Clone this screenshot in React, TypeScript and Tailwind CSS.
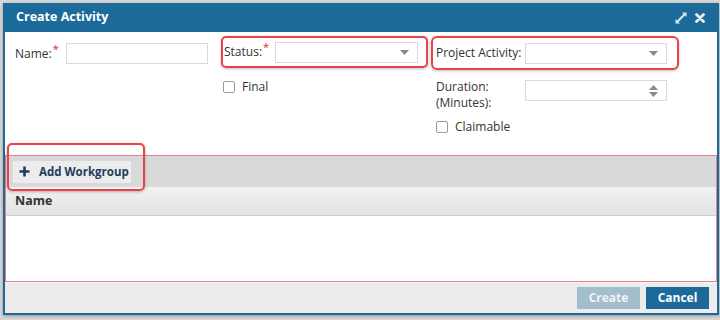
import React from 'react'

const Req = () => <span className="text-[#e3262b] text-[11px] relative -top-[5px] ml-[1px]">*</span>

const Caret = () => (
  <svg width="9" height="5" viewBox="0 0 9 5"><path d="M0 0h9L4.5 5z" fill="#8a8a8a" /></svg>
)

const Select = ({ w }: { w: string }) => (
  <div className={`${w} h-[21px] border border-[#d9d9d9] bg-white flex items-center justify-end pr-[8px]`}>
    <Caret />
  </div>
)

const Check = ({ label }: { label: string }) => (
  <div className="flex items-center gap-[7px]">
    <div className="w-[12px] h-[12px] border border-[#9a9a9a] rounded-[2px] bg-white" />
    <span>{label}</span>
  </div>
)

export default function App() {
  return (
    <div className="w-[720px] h-[320px] bg-[#d6d6d6] pt-[3px] pl-[3px] text-[12px] text-[#333]" style={{ fontFamily: '"Open Sans", "Noto Sans", sans-serif' }}>
      <div className="relative w-[716px] h-[312px] bg-white border-x-2 border-b-2 border-[#1b6a9a] flex flex-col shadow-[0_1px_3px_rgba(0,0,0,0.3)]">
        {/* header */}
        <div className="h-[29px] -mx-[2px] bg-[#1b6a9a] flex items-center pl-[13px] pr-[14px] text-white">
          <span className="font-bold text-[12.5px] flex-1">Create Activity</span>
          <svg width="12" height="12" viewBox="0 0 13 13" className="mr-[8px]">
            <path d="M7.5 0.5H12.5V5.5L10.8 3.8L3.8 10.8L5.5 12.5H0.5V7.5L2.2 9.2L9.2 2.2Z" fill="#dbe7f0" />
          </svg>
          <svg width="10" height="10" viewBox="0 0 10 10">
            <path d="M1.5 1.5L8.5 8.5M8.5 1.5L1.5 8.5" stroke="#e9f0f5" strokeWidth="2.8" strokeLinecap="round" />
          </svg>
        </div>

        {/* form */}
        <div className="h-[123px] flex items-start pl-[10px] pt-[4px]">
          <div className="flex items-center mt-[7px]">
            <span className="w-[51px] shrink-0">Name:<Req /></span>
            <div className="w-[142px] h-[21px] border border-[#d9d9d9]" />
          </div>
          <div className="ml-[13px] flex flex-col">
            <div className="w-[207px] h-[32px] border-2 border-[#e8424a] rounded-[5px] flex items-center pl-[1px] shadow-[0_1px_3px_rgba(0,0,0,0.25)]">
              <span className="w-[51px] shrink-0">Status:<Req /></span>
              <Select w="w-[143px]" />
            </div>
            <div className="mt-[10px] ml-[2px]"><Check label="Final" /></div>
          </div>
          <div className="ml-[3px] flex flex-col">
            <div className="w-[248px] h-[34px] border-2 border-[#e8424a] rounded-[6px] flex items-center pl-[3px] shadow-[0_1px_3px_rgba(0,0,0,0.25)]">
              <span className="w-[89px] shrink-0">Project Activity:</span>
              <Select w="w-[142px]" />
            </div>
            <div className="flex items-start mt-[10px] ml-[5px]">
              <span className="w-[89px] shrink-0 leading-[16px] -mt-[1px]">Duration:<br />(Minutes):</span>
              <div className="w-[142px] h-[21px] border border-[#d9d9d9] flex items-center justify-end pr-[8px]">
                <svg width="9" height="12" viewBox="0 0 9 12"><path d="M0 5h9L4.5 0zM0 7h9L4.5 12z" fill="#8a8a8a" /></svg>
              </div>
            </div>
            <div className="mt-[7px] ml-[5px]"><Check label="Claimable" /></div>
          </div>
        </div>

        {/* workgroup grid */}
        <div className="h-[127px] border border-[#ec7f86] flex flex-col">
          <div className="h-[31px] bg-[#d9d9d9] flex items-center pl-[7px]">
            <div className="h-[22px] w-[118px] bg-[#ececec] flex items-center pl-[6px] gap-[9px] text-[#1e3d5a] font-bold text-[11.5px]">
              <svg width="11" height="11" viewBox="0 0 11 11"><path d="M5.5 0.5V10.5M0.5 5.5H10.5" stroke="#1e3d5a" strokeWidth="2.6" /></svg>
              <span>Add Workgroup</span>
            </div>
          </div>
          <div className="h-[29px] bg-gradient-to-b from-[#f1f1f1] to-[#e3e3e3] border-b border-[#cfcfcf] flex items-center pl-[9px] font-bold text-[12.5px] text-[#333]">
            Name
          </div>
          <div className="flex-1 bg-white" />
        </div>

        {/* footer */}
        <div className="flex-1 bg-[#ececec] border-t border-[#f6f6f6] flex items-center justify-end gap-[6px] pr-[8px]">
          <div className="w-[63px] h-[22px] bg-[#a2bdcc] text-[#eef3f6] font-bold flex items-center justify-center">Create</div>
          <div className="w-[63px] h-[22px] bg-[#1b6a9a] text-white font-bold flex items-center justify-center">Cancel</div>
        </div>

        {/* annotation around add workgroup */}
        <div className="absolute left-[2px] top-[140px] w-[138px] h-[48px] border-2 border-[#e8424a] rounded-[5px] shadow-[0_1px_3px_rgba(0,0,0,0.25)]" />
      </div>
    </div>
  )
}
